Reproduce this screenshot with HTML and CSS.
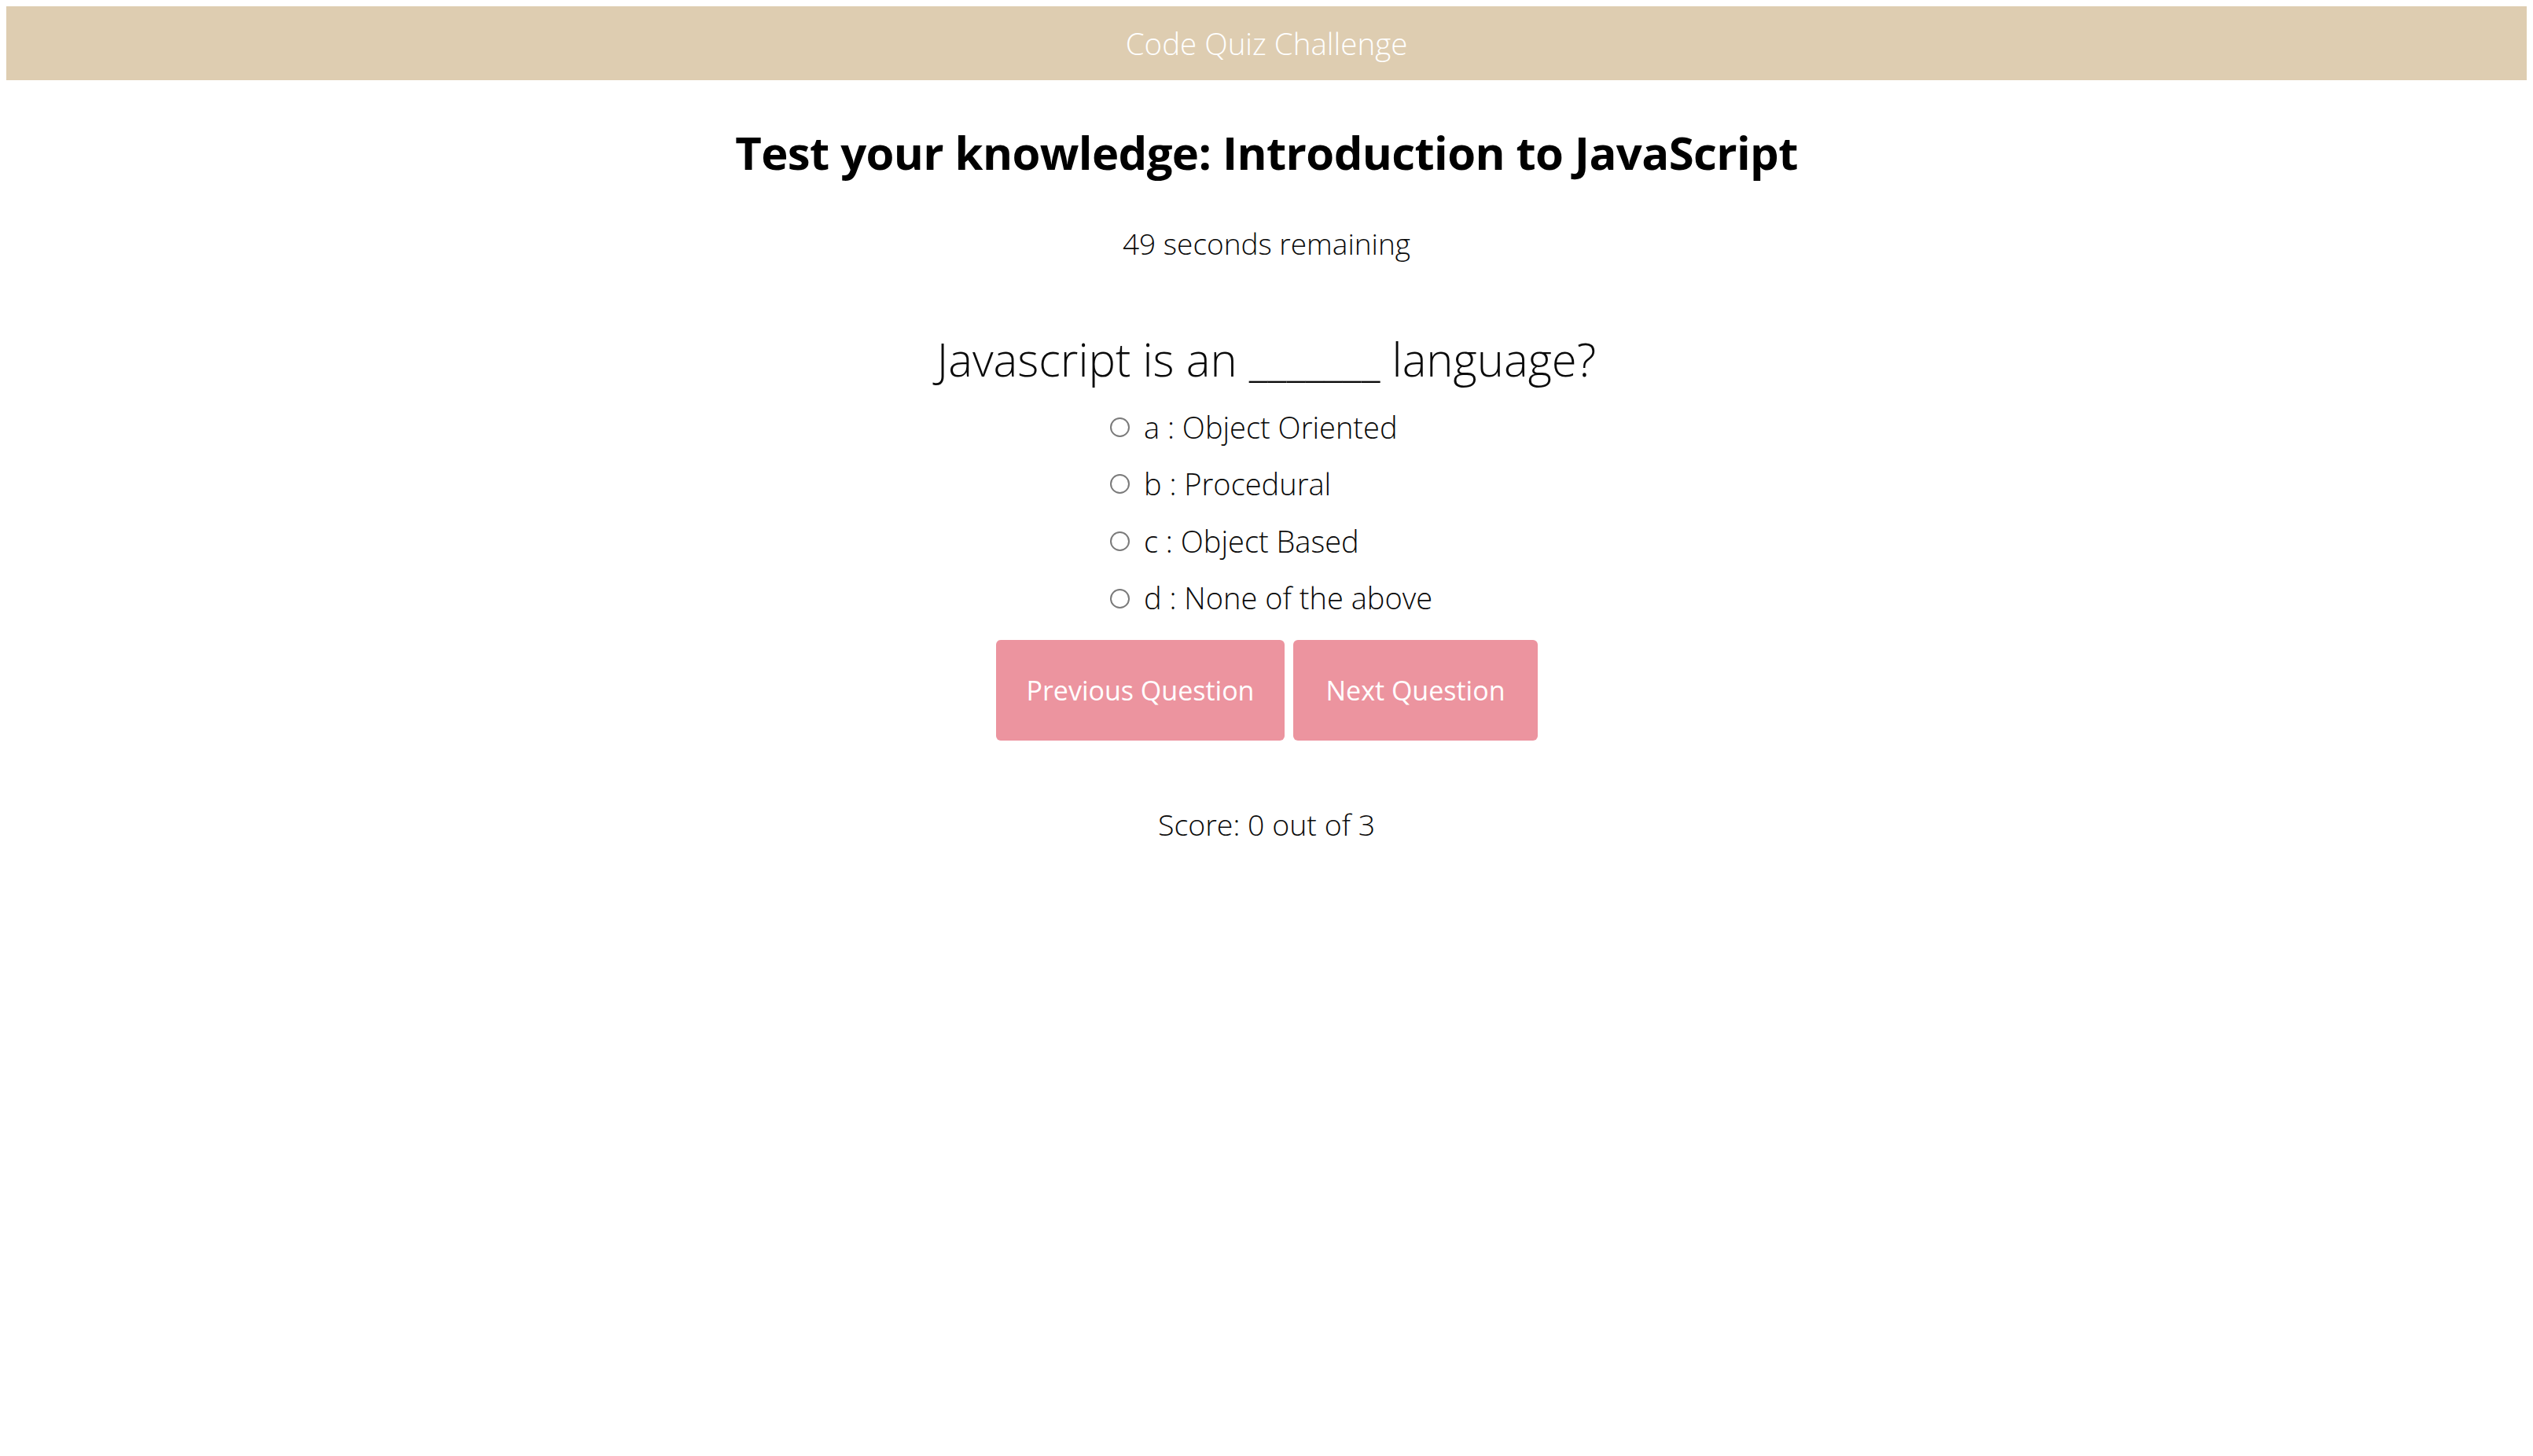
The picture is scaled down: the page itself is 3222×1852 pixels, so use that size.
FILE: index.html
```html
<!DOCTYPE html>
<html lang="en">
<head>
<meta charset="utf-8">
<title>Code Quiz Challenge</title>
<link rel="stylesheet" href="styles.css">
</head>
<body>
<header class="topbar">Code Quiz Challenge</header>
<main class="quiz">
  <h1 class="quiz-title">Test your knowledge: Introduction to JavaScript</h1>
  <div class="timer">49 seconds remaining</div>
  <div class="question">Javascript is an _______ language?</div>
  <div class="options">
    <label class="option"><input type="radio" name="answer" class="radio"><span>a : Object Oriented</span></label>
    <label class="option"><input type="radio" name="answer" class="radio"><span>b : Procedural</span></label>
    <label class="option"><input type="radio" name="answer" class="radio"><span>c : Object Based</span></label>
    <label class="option"><input type="radio" name="answer" class="radio"><span>d : None of the above</span></label>
  </div>
  <div class="actions">
    <button class="btn btn-prev">Previous Question</button>
    <button class="btn">Next Question</button>
  </div>
  <div class="score">Score: 0 out of 3</div>
</main>
</body>
</html>
```
FILE: styles.css
```css
html, body {
  background: #ffffff;
}
body {
  margin: 8px;
  font-family: "Open Sans", "Liberation Sans", sans-serif;
  color: #0a0a0a;
}
.topbar {
  height: 94px;
  line-height: 94px;
  background: #decdb1;
  color: #ffffff;
  text-align: center;
  font-size: 38.5px;
  font-weight: 300;
}
.quiz {
  display: flex;
  flex-direction: column;
  align-items: center;
  text-align: center;
}
.quiz-title {
  margin: 57px 0 0;
  font-size: 58px;
  line-height: 1.2;
  font-weight: 700;
  color: #000000;
  letter-spacing: -0.6px;
}
.timer {
  margin-top: 59px;
  font-size: 37px;
  line-height: 1.2;
  font-weight: 300;
}
.question {
  margin-top: 90px;
  font-size: 58px;
  line-height: 1.2;
  font-weight: 300;
}
.options {
  margin-top: 29px;
  padding-left: 12px;
  display: flex;
  flex-direction: column;
  align-items: flex-start;
  gap: 27px;
}
.option {
  display: flex;
  align-items: center;
  gap: 18px;
  font-size: 38px;
  line-height: 1.2;
  font-weight: 300;
}
.radio {
  appearance: none;
  -webkit-appearance: none;
  margin: 0;
  width: 25px;
  height: 25px;
  border: 2px solid #7a7a7a;
  border-radius: 50%;
  background: #ffffff;
  box-sizing: border-box;
}
.actions {
  margin-top: 30px;
  display: flex;
  gap: 11px;
}
.btn {
  height: 128px;
  padding: 0 41px;
  border: none;
  border-radius: 6px;
  background: #ec949f;
  color: #ffffff;
  font-family: "Open Sans", "Liberation Sans", sans-serif;
  font-size: 34px;
  font-weight: 400;
}
.btn-prev {
  padding: 0 39px;
}
.score {
  margin-top: 84px;
  font-size: 37.5px;
  line-height: 1.2;
  font-weight: 300;
}
```
